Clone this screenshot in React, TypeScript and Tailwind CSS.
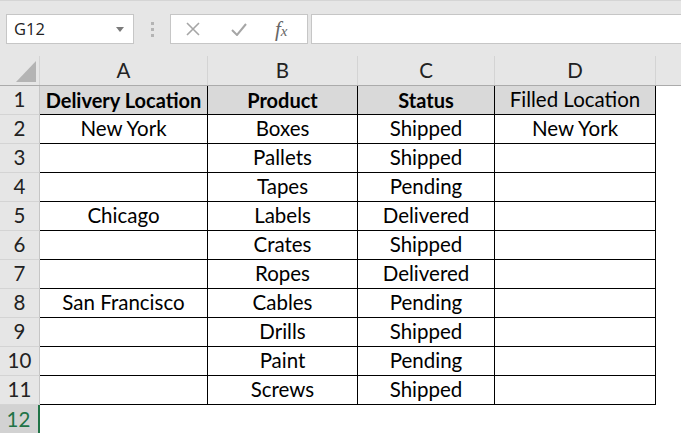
import React from "react";

const cols = [
  { key: "A", w: "w-[168px]" },
  { key: "B", w: "w-[150px]" },
  { key: "C", w: "w-[137px]" },
  { key: "D", w: "w-[161px]" },
];

const rows: [string, string, string, string][] = [
  ["New York", "Boxes", "Shipped", "New York"],
  ["", "Pallets", "Shipped", ""],
  ["", "Tapes", "Pending", ""],
  ["Chicago", "Labels", "Delivered", ""],
  ["", "Crates", "Shipped", ""],
  ["", "Ropes", "Delivered", ""],
  ["San Francisco", "Cables", "Pending", ""],
  ["", "Drills", "Shipped", ""],
  ["", "Paint", "Pending", ""],
  ["", "Screws", "Shipped", ""],
];

const font = { fontFamily: "Lato, 'Open Sans', sans-serif" };

function RowHeader({ n, selected }: { n: number; selected?: boolean }) {
  return (
    <div
      className={
        selected
          ? "flex h-full w-[40px] shrink-0 items-center justify-center border-r-2 border-[#217346] bg-[#d2d2d2] pr-[1px] pb-[1px] text-[20.5px] text-[#217346]"
          : "flex h-full w-[40px] shrink-0 items-center justify-center border-r border-b border-r-[#c6c6c6] border-b-[#d4d4d4] bg-[#e6e6e6] pb-[1px] text-[20.5px] text-[#222]"
      }
    >
      {n}
    </div>
  );
}

export default function App() {
  return (
    <div className="h-[433px] w-[681px] overflow-hidden bg-white text-black" style={font}>
      {/* formula bar */}
      <div className="flex h-[56px] items-start border-t border-[#d5d5d5] bg-[#e6e6e6] pt-[13px]">
        <div className="ml-[6px] flex h-[30px] w-[128px] items-center justify-between border border-[#c6c6c6] bg-white pl-[7px] pr-[9px]">
          <span className="text-[16.5px] text-[#222]" style={{ fontFamily: "'Open Sans', sans-serif" }}>
            G12
          </span>
          <svg width="8" height="5" viewBox="0 0 8 5">
            <path d="M0 0h8L4 5z" fill="#7a7a7a" />
          </svg>
        </div>
        <div className="ml-[17px] mt-[8px] flex w-[3px] flex-col gap-[3px]">
          <div className="h-[3px] w-[3px] bg-[#b4b4b4]" />
          <div className="h-[3px] w-[3px] bg-[#b4b4b4]" />
          <div className="h-[3px] w-[3px] bg-[#b4b4b4]" />
        </div>
        <div className="ml-[16px] flex h-[30px] w-[138px] items-center border border-[#c6c6c6] bg-white">
          <svg className="ml-[15px]" width="14" height="14" viewBox="0 0 14 14">
            <path d="M1 1l12 12M13 1L1 13" stroke="#a6a6a6" strokeWidth="1.6" />
          </svg>
          <svg className="ml-[31px]" width="16" height="13" viewBox="0 0 16 13">
            <path d="M1 7l5 5L15 1" stroke="#a6a6a6" strokeWidth="2" fill="none" />
          </svg>
          <span
            className="ml-[28px] text-[21px] leading-none italic text-[#666]"
            style={{ fontFamily: "'Liberation Serif', serif" }}
          >
            f<span className="text-[15px]">x</span>
          </span>
        </div>
        <div className="ml-[3px] h-[30px] flex-1 border-y border-l border-[#c6c6c6] bg-white" />
      </div>

      {/* column headers */}
      <div className="flex h-[30px] border-b border-[#ababab] bg-[#e6e6e6]">
        <div className="relative h-full w-[40px] shrink-0 border-r border-[#d4d4d4]">
          <svg className="absolute right-[3px] bottom-[3px]" width="20" height="21" viewBox="0 0 20 21">
            <path d="M20 0V21H0z" fill="#b4b4b4" />
          </svg>
        </div>
        {cols.map((c) => (
          <div
            key={c.key}
            className={`${c.w} flex shrink-0 items-center justify-center border-r border-[#d4d4d4] text-[20.5px] text-[#222]`}
          >
            {c.key}
          </div>
        ))}
        <div className="flex-1" />
      </div>

      {/* row 1 */}
      <div className="flex h-[29px]">
        <RowHeader n={1} />
        {["Delivery Location", "Product", "Status", "Filled Location"].map((t, i) => (
          <div
            key={t}
            className={`${cols[i].w} flex shrink-0 items-center justify-center border-r border-b border-black bg-[#d9d9d9] pb-[1px] ${
              i < 3 ? "text-[20px] font-bold" : "text-[20.5px]"
            }`}
          >
            {t}
          </div>
        ))}
      </div>

      {rows.map((r, ri) => (
        <div key={ri} className="flex h-[29px]">
          <RowHeader n={ri + 2} />
          {r.map((t, i) => (
            <div
              key={i}
              className={`${cols[i].w} flex shrink-0 items-center justify-center border-r border-b border-black pb-[2px] text-[20.5px]`}
            >
              {t}
            </div>
          ))}
        </div>
      ))}

      <div className="flex h-[29px]">
        <RowHeader n={12} selected />
      </div>
    </div>
  );
}
